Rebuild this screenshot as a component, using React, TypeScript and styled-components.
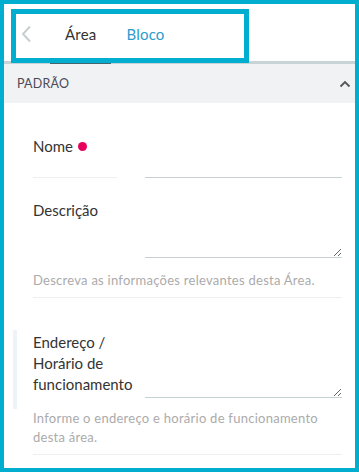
import React from "react";
import styled, { createGlobalStyle } from "styled-components";

const Global = createGlobalStyle`
  html, body { margin: 0; padding: 0; background: #fff; }
  body { font-family: Lato, "Open Sans", Arial, sans-serif; }
  * { box-sizing: border-box; }
`;

const CYAN = "#02aed0";

const Frame = styled.div`
  position: relative;
  width: 359px;
  height: 472px;
  border: 4px solid ${CYAN};
  background: #fff;
  overflow: hidden;
`;

const Highlight = styled.div`
  position: absolute;
  left: 7px;
  top: 5px;
  width: 238px;
  height: 54px;
  border: 5px solid ${CYAN};
  pointer-events: none;
`;

const TabBar = styled.div`
  display: flex;
  align-items: stretch;
  height: 60px;
  border-bottom: 3px solid #c8d3d6;
`;

const BackButton = styled.div`
  width: 46px;
  display: flex;
  align-items: center;
  justify-content: center;
  padding-top: 2px;
`;

const Tab = styled.div<{ $active?: boolean }>`
  display: flex;
  align-items: center;
  padding: 2px 15px 0;
  margin-bottom: -3px;
  font-size: 15px;
  letter-spacing: 0.2px;
  color: ${(p) => (p.$active ? "#333" : "#2e9ccb")};
  border-bottom: 3px solid ${(p) => (p.$active ? "#46656b" : "transparent")};
`;

const SectionHeader = styled.div`
  height: 39px;
  display: flex;
  align-items: center;
  justify-content: space-between;
  padding: 0 4px 0 13px;
  background: #f1f2f4;
  font-size: 12.5px;
  color: #4b4b57;
  letter-spacing: 0.2px;
  text-transform: uppercase;
`;

const FieldWrap = styled.div<{ $top: number }>`
  margin-top: ${(p) => p.$top}px;
  padding: 0 13px 0 9px;
`;

const Main = styled.div<{ $marked?: boolean; $bottom: number }>`
  display: grid;
  grid-template-columns: 104px 1fr;
  column-gap: 8px;
  align-items: start;
  padding: 2px 0 ${(p) => p.$bottom}px 16px;
  border-left: 4px solid ${(p) => (p.$marked ? "#edf3f9" : "transparent")};
`;

const Label = styled.div<{ $underlined?: boolean }>`
  font-size: 15px;
  line-height: 21px;
  color: #333;
  display: flex;
  align-items: center;
  width: ${(p) => (p.$underlined ? "84px" : "auto")};
  padding-bottom: ${(p) => (p.$underlined ? "20px" : "0")};
  border-bottom: ${(p) => (p.$underlined ? "1px solid #eeeeee" : "none")};
`;

const Required = styled.span`
  display: inline-block;
  width: 9px;
  height: 9px;
  border-radius: 50%;
  background: #e6005c;
  margin-left: 5px;
`;

const TextInput = styled.input`
  display: block;
  width: 100%;
  height: 42px;
  border: none;
  border-bottom: 1px solid #c5d1d4;
  outline: none;
  background: transparent;
  font: inherit;
`;

const TextArea = styled.textarea<{ $h: number }>`
  display: block;
  width: 100%;
  height: ${(p) => p.$h}px;
  border: none;
  border-bottom: 1px solid #c5d1d4;
  outline: none;
  background: transparent;
  resize: vertical;
  font: inherit;
  padding: 0;
`;

const Help = styled.div`
  padding-left: 20px;
  font-size: 13px;
  line-height: 19px;
  letter-spacing: 0.26px;
  color: #ababab;
`;

const Divider = styled.div`
  margin: 7px 0 0 20px;
  border-top: 1px solid #eeeeee;
`;

const ChevronLeft = () => (
  <svg width="14" height="18" viewBox="0 0 14 18" fill="none">
    <path d="M10 1.5 L3 9 L10 16.5" stroke="#c7cfd1" strokeWidth="2" />
  </svg>
);

const ChevronUp = () => (
  <svg width="12" height="8" viewBox="0 0 12 8" fill="none">
    <path d="M1.5 6.5 L6 2 L10.5 6.5" stroke="#555" strokeWidth="1.8" />
  </svg>
);

export default function App() {
  return (
    <>
      <Global />
      <Frame>
        <TabBar>
          <BackButton>
            <ChevronLeft />
          </BackButton>
          <Tab $active>Área</Tab>
          <Tab>Bloco</Tab>
        </TabBar>
        <SectionHeader>
          <span>Padrão</span>
          <ChevronUp />
        </SectionHeader>

        <FieldWrap $top={31}>
          <Main $bottom={12}>
            <Label $underlined>
              Nome
              <Required />
            </Label>
            <TextInput />
          </Main>
        </FieldWrap>

        <FieldWrap $top={8}>
          <Main $bottom={13}>
            <Label>Descrição</Label>
            <TextArea $h={58} />
          </Main>
          <Help>Descreva as informações relevantes desta Área.</Help>
          <Divider />
        </FieldWrap>

        <FieldWrap $top={32}>
          <Main $marked $bottom={11}>
            <Label>
              Endereço /<br />
              Horário de
              <br />
              funcionamento
            </Label>
            <TextArea $h={66} />
          </Main>
          <Help>Informe o endereço e horário de funcionamento desta área.</Help>
          <Divider />
        </FieldWrap>

        <Highlight />
      </Frame>
    </>
  );
}
